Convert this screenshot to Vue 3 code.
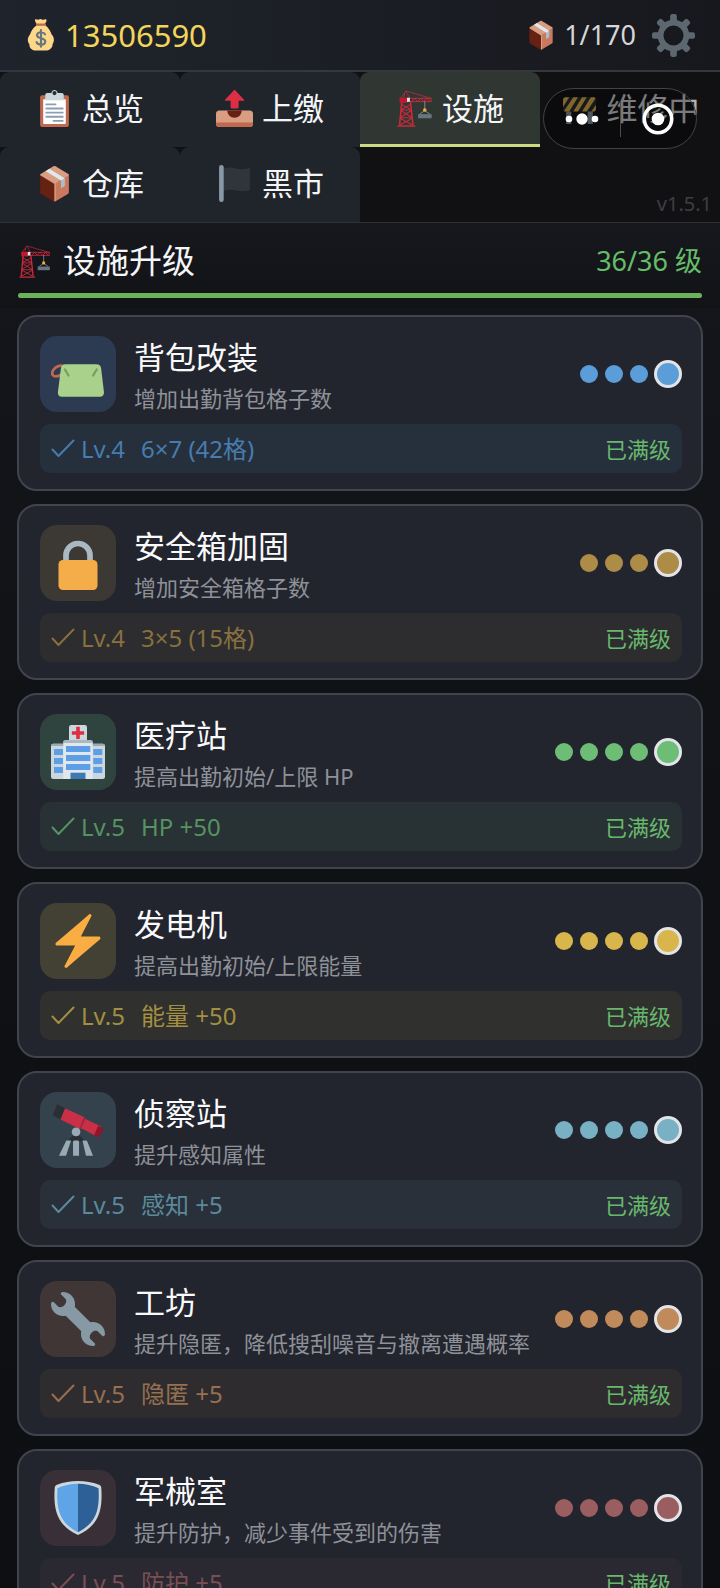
<template>
  <div class="app">
    <svg class="sprite" aria-hidden="true">
      <symbol id="i-money" viewBox="0 0 36 36">
        <path fill="#fdd888" d="M13 5.500C11.500 3.500 10.800 1.500 11.500.600c.9-.9 2.500.5 3.500.2s2-1 3.200-.6 1.800.6 2.800.6 2.200-.9 3 0-.2 2.800-1.800 4.700z" />
        <path fill="#fdd888" d="M13.200 7h9.800c4 3.200 5.500 6.500 7 10.500 1.500 1.200 2.500 3.500 2.500 6 0 2-.7 3.500-1.500 4.500.3 4.500-3.500 7.500-8 7.500H12.500c-4.500 0-8-3-7.500-7.200-1.200-1.300-1.800-2.800-1.800-4.800 0-2.500 1-4.500 2.300-5.800C7 13.500 9 9.800 13.200 7z" />
        <rect x="12.300" y="5" width="11.500" height="2.300" rx="1.100" fill="#bf6952" />
        <path fill="none" stroke="#67757f" stroke-width="2.400" stroke-linecap="round" d="M22.500 17.200c-.8-1.500-2.500-2.300-4.500-2.300-2.700 0-4.500 1.300-4.500 3.300 0 4.600 9.300 2.200 9.300 7 0 2.300-2.100 3.600-4.800 3.600-2.300 0-4.200-1-5-2.700M18 12.500v18.700" />
      </symbol>
      <symbol id="i-box" viewBox="0 0 36 36">
        <path fill="#662113" d="M4 9.500L18 18v17.500c-.5 0-1-.2-1.500-.5L5 28.300c-.6-.4-1-1-1-1.800z" />
        <path fill="#c9795d" d="M32 9.500L18 18v17.500c.5 0 1-.2 1.500-.5L31 28.300c.6-.4 1-1 1-1.800z" />
        <path fill="#d99e82" d="M31.500 8.800L19 1.200c-.7-.4-1.300-.4-2 0L4.500 8.800c-.6.4-.6 1 0 1.400L18 18.500l13.500-8.300c.6-.4.6-1 0-1.400z" />
        <path fill="#d99e82" d="M18 17.800l1.200-.5v17.800l-1.200.5z" />
        <path fill="#e1e8ed" d="M9.500 6L13 3.700l14.800 9.300v7.500l-3.500 2v-7.300z" />
        <path fill="#99aab5" d="M24.300 15.200l3.500-2.200v7.500l-3.500 2z" opacity=".7" />
      </symbol>
      <symbol id="i-gear" viewBox="0 0 36 36">
        <circle cx="18" cy="18" r="10.800" fill="none" stroke="#5c6770" stroke-width="4.800" />
        <g fill="#5c6770">
          <rect v-for="n in 8" :key="n" x="15.200" y="0" width="5.600" height="7.500" rx="1.800" :transform="`rotate(${n * 45} 18 18)`" />
        </g>
      </symbol>
      <symbol id="i-clipboard" viewBox="0 0 36 36">
        <rect x="4" y="5" width="28" height="31" rx="2" fill="#c1694f" />
        <rect x="7" y="9" width="22" height="24" rx="1" fill="#fff" />
        <path fill="#ccd6dd" d="M25 3h-4c0-1.700-1.300-3-3-3s-3 1.300-3 3h-4c-1.100 0-2 .9-2 2v5h18V5c0-1.100-.9-2-2-2z" />
        <circle cx="18" cy="3" r="2" fill="#292f33" />
        <path fill="none" stroke="#8b9fb3" stroke-width="1.800" stroke-linecap="round" d="M10 14h9M10 18h16M10 22h16M10 26h16M17 30h9" />
      </symbol>
      <symbol id="i-upload" viewBox="0 0 36 36">
        <path fill="#d99e82" d="M3 20h30c1.700 0 3 1.300 3 3v10c0 1.700-1.300 3-3 3H3c-1.700 0-3-1.300-3-3V23c0-1.700 1.300-3 3-3z" />
        <path fill="#c1694f" d="M0 31.500h36V33c0 1.700-1.300 3-3 3H3c-1.700 0-3-1.300-3-3z" />
        <path fill="#662113" d="M11 20h14c0 4-3.100 7-7 7s-7-3-7-7z" />
        <path fill="#dd2e44" d="M17.200.500c.5-.6 1.200-.6 1.700 0l8.200 8.800c.5.600.3 1.200-.5 1.200H22v6c0 1-.6 1.500-1.500 1.500h-4.800c-.9 0-1.500-.5-1.500-1.500v-6H9.500c-.8 0-1-.6-.5-1.200z" />
      </symbol>
      <symbol id="i-crane" viewBox="0 0 36 36">
        <g fill="none" stroke="#cb2a3d">
          <path stroke-width="1.500" d="M5.700 11L3.500 34M14 11l2.500 23M1.500 35h17.200" />
          <path stroke-width="1" d="M5.400 14l9 5M14.400 14l-9.200 5M4.800 19.500h10M4.800 20l10.400 6.500M15 20L4.300 26.500M4.200 27h11.500M4.200 27.500L16 34M15.800 27.500L3.800 34" />
          <path stroke-width=".7" d="M4.500 8L9.500 1l4 7M9.500 1L34 8M8.500 3L7 11" />
          <path stroke-width=".9" d="M13 8h21.500M13 11.300h21.500M34 8v3.300M15 11.300L18 8l3 3.300L24 8l3 3.300L30 8l3 3.300" />
        </g>
        <path fill="#be1931" d="M3.500 7.500h8v5h-8z" />
        <path fill="#e1e8ed" d="M10.700 7.500h2.800v4h-2.800z" />
        <path fill="none" stroke="#99aab5" stroke-width=".7" d="M28 11v8M28 20l-5 3.500M28 20l5 3.500" />
        <circle cx="28" cy="19.500" r="1.700" fill="#ffac33" />
        <path fill="#66757f" d="M21.500 23.500h13.200v4H21.500z" />
      </symbol>
      <symbol id="i-barrier" viewBox="0 0 36 36">
        <path fill="#99aab5" d="M5 16h5v17H5zM26 16h5v17h-5z" />
        <rect x="2" y="7" width="32" height="14" rx="2.500" fill="#292f33" />
        <path fill="#ffcc4d" d="M4.500 7H8L2 16.500v-7C2 8 3 7 4.500 7zM12 7h4.500L8 21H4.500c-.7 0-1.200-.2-1.600-.6zM20.500 7H25l-8.500 14H12zM29 7h2.500c.9 0 1.700.4 2.100 1.200L25 21h-4.500zM34 14.500v4c0 1.500-1 2.500-2.500 2.500H29.500z" />
      </symbol>
      <symbol id="i-flag" viewBox="0 0 36 36">
        <path fill="#2f353a" d="M7 3.500c5-2 9-1 13 0s8 .8 12-.6c.7-.2 1 .1 1 .7v19.800c0 .6-.3.900-.8 1.100-4 1.300-8 1.300-12.200.3s-8-1.300-13 .7z" />
        <rect x="3" y="0" width="4.500" height="36" rx="2.200" fill="#8899a6" />
      </symbol>
      <symbol id="i-pouch" viewBox="0 0 36 36">
        <ellipse cx="5" cy="16" rx="4.700" ry="3" transform="rotate(-35 5 16)" fill="none" stroke="#c1694f" stroke-width="1.800" />
        <path fill="#a9d18b" d="M9.500 11.500h20.800c1.800 0 2.900 1 3.100 2.600l1.900 15.900c.2 1.900-.9 3.200-2.700 3.200H7.200c-1.800 0-2.800-1.200-2.600-3l2-15.900c.2-1.700 1.300-2.800 2.900-2.800z" />
        <path stroke="#7a9d62" stroke-width="1.500" stroke-linecap="round" d="M9.300 15l2.400 4M30.500 15l-2.400 4" />
      </symbol>
      <symbol id="i-lock" viewBox="0 0 36 36">
        <path fill="none" stroke="#aab8c2" stroke-width="3.800" d="M10 19v-6a8 8 0 0 1 16 0v6" />
        <rect x="5" y="16" width="26" height="20" rx="3" fill="#f5ad49" />
      </symbol>
      <symbol id="i-hospital" viewBox="0 0 36 36">
        <rect x="12" y="0" width="12" height="13" rx="1.500" fill="#ccd6dd" />
        <path fill="#dd2e44" d="M16.800 1.200h2.400v2.900h2.900v2.400h-2.900v2.900h-2.400V6.500h-2.900V4.100h2.900z" />
        <rect x="0" y="12.500" width="36" height="23.500" rx="1.500" fill="#ccd6dd" />
        <path fill="#99aab5" d="M1.500 12.500h33c.8 0 1.500.7 1.500 1.500H0c0-.8.7-1.500 1.500-1.500z" />
        <path fill="#e1e8ed" d="M8.200 11h19.600v25H8.200z" />
        <path fill="#aab8c2" d="M9.500 10h17c.8 0 1.300.5 1.300 1.500v.5H8.200v-.5c0-1 .5-1.500 1.300-1.500z" />
        <path fill="#5d9fe6" d="M2 16h6v4H2zM2 22h6v4H2zM2 28h6v4H2zM28.200 16h6v4h-6zM28.200 22h6v4h-6zM28.200 28h6v4h-6zM10 14h16.200v4H10zM10 20h16.200v4H10zM10 26h16.200v4H10z" />
        <path fill="#4078b4" d="M13 31.800h10V36H13z" />
      </symbol>
      <symbol id="i-bolt" viewBox="0 0 36 36">
        <path fill="#f9ad42" d="M32.900 15.700c-.1-.4-.5-.7-.9-.7H19.900l7-13.500c.2-.4.1-.9-.3-1.200-.4-.3-.9-.3-1.300 0L18 6.600 3.300 19.200c-.3.3-.4.7-.3 1.100s.6.7 1 .7h12.100l-7 13.500c-.2.4-.1.9.3 1.200.4.3.9.3 1.300 0L18 29.400l14.700-12.600c.3-.3.4-.7.2-1.100z" />
      </symbol>
      <symbol id="i-scope" viewBox="0 0 36 36">
        <path fill="#c93048" d="M9.300 3.500L22 9.300l.4 1 11 5.300-3 6.700L20.500 17l-1.200.3-13-6.300z" />
        <path fill="#a02335" d="M22 9.300l1 .9-3.200 7.200-.8-.3z" />
        <path fill="#292f33" d="M4.200.7l5.100 2.800-3 7.300L1.100 8.200z" />
        <path fill="#8f1528" d="M31.500 15.200l3.200 1.600c.3.200.3.400.2.600l-2.600 5.200c-.2.400-.5.400-.8.2l-2.800-1.300z" />
        <path fill="#292f33" d="M14.200 22h5l4 3.500H11z" />
        <circle cx="16.700" cy="19.300" r="2.900" fill="#99aab5" />
        <path fill="#99aab5" d="M10.200 25h3.200L10 35.200H5.300zM15.700 25h2c.6 0 1 .4 1 1v9.200h-4V26c0-.6.4-1 1-1zM21 25h2c.6 0 1 .2 1.200.7L28 35.200h-4.700z" />
      </symbol>
      <symbol id="i-wrench" viewBox="0 0 36 36">
        <path fill="#8899a6" d="M27.989 19.977c-.622 0-1.225.078-1.806.213L15.811 9.818c.134-.581.212-1.184.212-1.806C16.023 3.587 12.436 0 8.012 0 7.110 0 5.910.916 6.909 1.915l2.997 2.997s.999 1.998-.999 3.995-3.996.998-3.996.998L1.915 6.909C.916 5.910 0 7.105 0 8.012c0 4.425 3.587 8.012 8.012 8.012.622 0 1.225-.078 1.806-.212l10.371 10.371c-.135.581-.213 1.184-.213 1.806 0 4.425 3.588 8.011 8.012 8.011.901 0 2.101-.916 1.102-1.915l-2.997-2.997s-.999-1.998.999-3.995 3.995-.999 3.995-.999l2.997 2.997c1 .999 1.916-.196 1.916-1.102 0-4.425-3.587-8.012-8.011-8.012z" />
      </symbol>
      <symbol id="i-shield" viewBox="0 0 36 36">
        <path fill="#ccd6dd" d="M18 0c5 0 9.500.8 14 2.500 1 .4 1.500 1 1.500 2 .4 5 .4 11-1.200 16.500C30.200 28 25 33 18 36 11 33 5.800 28 3.700 21 2.100 15.500 2.100 9.500 2.500 4.500c0-1 .5-1.600 1.500-2C8.500.8 13 0 18 0z" />
        <path fill="#5ea5e8" d="M18 1.800v32.300c-6-2.900-10.700-7.400-12.500-13.600C4 15.500 4 10 4.300 4.800 8.500 2.800 13 1.800 18 1.800z" />
        <path fill="#2d6096" d="M18 1.800v32.300c6-2.900 10.700-7.400 12.500-13.600C32 15.500 32 10 31.700 4.800 27.500 2.800 23 1.800 18 1.800z" />
      </symbol>
      <symbol id="i-check" viewBox="0 0 24 24">
        <path fill="none" stroke="currentColor" stroke-width="2" stroke-linecap="round" stroke-linejoin="round" d="M1.500 12.500l6 6.500L22.500 3.500" />
      </symbol>
    </svg>

    <header class="topbar">
      <div class="money">
        <svg class="money-icon"><use href="#i-money" /></svg>
        <span>{{ money }}</span>
      </div>
      <div class="storage">
        <svg class="storage-icon"><use href="#i-box" /></svg>
        <span>{{ used }}/{{ capacity }}</span>
      </div>
      <button class="gear" type="button" aria-label="设置">
        <svg class="gear-icon"><use href="#i-gear" /></svg>
      </button>
    </header>

    <nav class="tabs">
      <button
        v-for="tab in tabs"
        :key="tab.id"
        type="button"
        :class="['tab', { active: tab.id === current, closed: tab.closed }]"
        :disabled="tab.closed"
        @click="current = tab.id"
      >
        <svg class="tab-icon"><use :href="`#i-${tab.icon}`" /></svg>
        <span>{{ tab.name }}</span>
      </button>
      <span class="version">v1.5.1</span>
      <div class="capsule">
        <button class="capsule-btn" type="button" aria-label="更多">
          <svg width="34" height="12" viewBox="0 0 34 12" fill="#fff">
            <circle cx="4" cy="6" r="3.300" />
            <circle cx="17" cy="6" r="5.700" />
            <circle cx="30" cy="6" r="3.300" />
          </svg>
        </button>
        <i class="capsule-line"></i>
        <button class="capsule-btn" type="button" aria-label="关闭">
          <svg width="32" height="32" viewBox="0 0 32 32">
            <circle cx="16" cy="16" r="13.700" fill="none" stroke="#fff" stroke-width="3.600" />
            <circle cx="16" cy="16" r="6.300" fill="#fff" />
          </svg>
        </button>
      </div>
    </nav>

    <section class="summary">
      <div class="summary-row">
        <svg class="summary-icon"><use href="#i-crane" /></svg>
        <h1>设施升级</h1>
        <span class="summary-count">{{ level }}/{{ maxLevel }} 级</span>
      </div>
      <div class="track">
        <div class="track-fill" :style="{ width: (level / maxLevel) * 100 + '%' }"></div>
      </div>
    </section>

    <main class="list">
      <article v-for="item in facilities" :key="item.name" :class="['card', item.theme]">
        <div class="card-head">
          <div class="card-icon">
            <svg><use :href="`#i-${item.icon}`" /></svg>
          </div>
          <div class="card-text">
            <h2>{{ item.name }}</h2>
            <p>{{ item.desc }}</p>
          </div>
          <div class="dots">
            <i v-for="n in item.level" :key="n" :class="['dot', { now: n === item.level }]"></i>
          </div>
        </div>
        <div class="effect">
          <svg class="check"><use href="#i-check" /></svg>
          <span class="effect-level">Lv.{{ item.level }}</span>
          <span class="effect-value">{{ item.effect }}</span>
          <span class="effect-max">已满级</span>
        </div>
      </article>
    </main>
  </div>
</template>

<script setup>
import { ref } from 'vue'

const money = ref(13506590)
const used = ref(1)
const capacity = ref(170)
const level = ref(36)
const maxLevel = ref(36)
const current = ref('facility')

const tabs = [
  { id: 'overview', name: '总览', icon: 'clipboard' },
  { id: 'submit', name: '上缴', icon: 'upload' },
  { id: 'facility', name: '设施', icon: 'crane' },
  { id: 'repair', name: '维修中', icon: 'barrier', closed: true },
  { id: 'storage', name: '仓库', icon: 'box' },
  { id: 'market', name: '黑市', icon: 'flag' },
]

const facilities = ref([
  { name: '背包改装', desc: '增加出勤背包格子数', icon: 'pouch', theme: 'blue', level: 4, effect: '6×7 (42格)' },
  { name: '安全箱加固', desc: '增加安全箱格子数', icon: 'lock', theme: 'bronze', level: 4, effect: '3×5 (15格)' },
  { name: '医疗站', desc: '提高出勤初始/上限 HP', icon: 'hospital', theme: 'green', level: 5, effect: 'HP +50' },
  { name: '发电机', desc: '提高出勤初始/上限能量', icon: 'bolt', theme: 'yellow', level: 5, effect: '能量 +50' },
  { name: '侦察站', desc: '提升感知属性', icon: 'scope', theme: 'cyan', level: 5, effect: '感知 +5' },
  { name: '工坊', desc: '提升隐匿，降低搜刮噪音与撤离遭遇概率', icon: 'wrench', theme: 'orange', level: 5, effect: '隐匿 +5' },
  { name: '军械室', desc: '提升防护，减少事件受到的伤害', icon: 'shield', theme: 'red', level: 5, effect: '防护 +5' },
])
</script>

<style>
body {
  margin: 0;
  background: #111216;
}
</style>

<style scoped>
.app {
  display: flex;
  flex-direction: column;
  height: 100vh;
  overflow: hidden;
  background: linear-gradient(#18191e, #101115 50%, #0e0f13);
  color: #f4f5f7;
  font-family: 'Noto Sans', 'Noto Sans CJK SC', sans-serif;
}

.sprite {
  position: absolute;
  width: 0;
  height: 0;
}

button {
  margin: 0;
  padding: 0;
  border: 0;
  background: none;
  color: inherit;
  font: inherit;
  cursor: pointer;
}

svg {
  display: block;
  flex: none;
}

h1,
h2,
p {
  margin: 0;
  font-weight: 400;
}

.topbar {
  display: flex;
  align-items: center;
  height: 70px;
  flex: none;
  padding: 0 25px;
  border-bottom: 2px solid #34373d;
  background: linear-gradient(90deg, #1f242c, #17181d);
}

.money {
  display: flex;
  align-items: center;
  gap: 8px;
  margin-right: auto;
  color: #f3d55b;
  font-size: 31px;
  line-height: 40px;
}

.money-icon {
  width: 32px;
  height: 32px;
}

.storage {
  display: flex;
  align-items: center;
  gap: 8px;
  color: #d5d6da;
  font-size: 27px;
  line-height: 40px;
}

.storage-icon {
  width: 30px;
  height: 30px;
}

.gear {
  margin-left: 16px;
}

.gear-icon {
  width: 43px;
  height: 43px;
}

.tabs {
  position: relative;
  display: grid;
  grid-template-columns: repeat(4, 1fr);
  grid-auto-rows: 75px;
  flex: none;
  border-bottom: 1px solid #303136;
  background: #111114;
}

.tab {
  display: flex;
  align-items: center;
  justify-content: center;
  gap: 9px;
  border-bottom: 3px solid transparent;
  border-radius: 9px 9px 0 0;
  background: #20242b;
  font-size: 31px;
  line-height: 40px;
}

.tab.active {
  border-bottom-color: #c9dc83;
  background: #303732;
}

.tab.closed {
  background: none;
  color: #f4f5f7;
  cursor: default;
  opacity: 0.7;
}

.tab-icon {
  width: 37px;
  height: 37px;
}

.version {
  grid-column: 4;
  align-self: end;
  justify-self: end;
  padding: 0 8px 3px;
  color: #3e3e43;
  font-size: 20px;
  line-height: 30px;
}

.capsule {
  position: absolute;
  top: 16px;
  right: 23px;
  display: flex;
  align-items: center;
  box-sizing: border-box;
  width: 154px;
  height: 61px;
  border: 1px solid #434347;
  border-radius: 31px;
  background: rgba(0, 0, 0, 0.3);
}

.capsule-btn {
  display: flex;
  flex: 1;
  align-items: center;
  justify-content: center;
}

.capsule-line {
  width: 1px;
  height: 36px;
  background: #4c4c50;
}

.summary {
  flex: none;
  padding: 16px 18px 10px;
  background: linear-gradient(#17181d, #121317);
}

.summary-row {
  display: flex;
  align-items: center;
  height: 44px;
  margin-bottom: 10px;
}

.summary-icon {
  width: 33px;
  height: 33px;
  margin-right: 12px;
}

.summary-row h1 {
  font-size: 33px;
  line-height: 44px;
}

.summary-count {
  margin-left: auto;
  color: #66bd69;
  font-size: 27px;
  line-height: 40px;
}

.track {
  height: 5px;
  border-radius: 3px;
  background: #2a2d33;
}

.track-fill {
  height: 100%;
  border-radius: 3px;
  background: #6bb25b;
}

.list {
  display: flex;
  flex: 1;
  flex-direction: column;
  gap: 13px;
  min-height: 0;
  padding: 7px 17px 13px;
  overflow-y: auto;
  scrollbar-width: none;
}

.card {
  flex: none;
  padding: 19px 19px 16px 21px;
  border: 2px solid #41434d;
  border-radius: 20px;
  background: #22252e;
}

.card-head {
  display: flex;
  align-items: center;
  gap: 18px;
}

.card-icon {
  display: flex;
  flex: none;
  align-items: center;
  justify-content: center;
  width: 76px;
  height: 76px;
  border-radius: 17px;
  background: var(--icon-bg);
}

.card-icon svg {
  width: 54px;
  height: 54px;
}

.card-text {
  display: flex;
  flex: 1;
  flex-direction: column;
  gap: 6px;
}

.card-text h2 {
  color: #fafafc;
  font-size: 31px;
  line-height: 42px;
}

.card-text p {
  color: #8f9198;
  font-size: 22px;
  line-height: 28px;
}

.dots {
  display: flex;
  align-items: center;
  gap: 7px;
}

.dot {
  width: 18px;
  height: 18px;
  border-radius: 50%;
  background: var(--dot);
}

.dot.now {
  width: 22px;
  height: 22px;
  margin-left: -1px;
  border: 3px solid #e2e4e8;
}

.effect {
  display: flex;
  align-items: center;
  height: 49px;
  margin-top: 12px;
  padding: 0 11px;
  border-radius: 10px;
  background: var(--row-bg);
  color: var(--text);
  font-size: 24px;
  line-height: 32px;
}

.check {
  width: 24px;
  height: 24px;
  margin-right: 6px;
}

.effect-level {
  margin-right: 16px;
}

.effect-max {
  margin-left: auto;
  color: #68b86c;
  font-size: 22px;
}

.blue {
  --dot: #5b9dd8;
  --text: #477cae;
  --icon-bg: #2c3b52;
  --row-bg: #26303c;
}

.bronze {
  --dot: #ad8c48;
  --text: #88703f;
  --icon-bg: #3c3935;
  --row-bg: #2d2c2f;
}

.green {
  --dot: #6dbd77;
  --text: #569362;
  --icon-bg: #30443f;
  --row-bg: #283134;
}

.yellow {
  --dot: #d8b64b;
  --text: #a48f41;
  --icon-bg: #434034;
  --row-bg: #30302f;
}

.cyan {
  --dot: #78b0c4;
  --text: #5b8a9c;
  --icon-bg: #33424d;
  --row-bg: #29303a;
}

.orange {
  --dot: #c08a5a;
  --text: #96704f;
  --icon-bg: #403635;
  --row-bg: #2f2c30;
}

.red {
  --dot: #9b5e60;
  --text: #7a4e55;
  --icon-bg: #382f37;
  --row-bg: #2a2932;
}
</style>
